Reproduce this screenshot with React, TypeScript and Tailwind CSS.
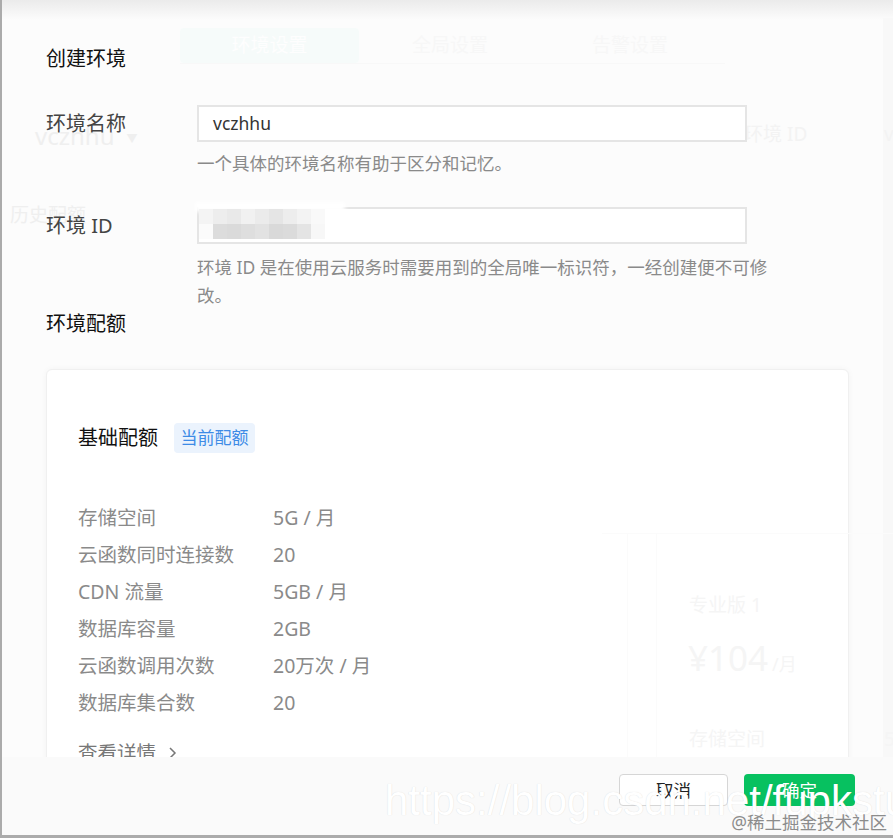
import React from "react";

const quotaRows: { label: string; value: string }[] = [
  { label: "存储空间", value: "5G / 月" },
  { label: "云函数同时连接数", value: "20" },
  { label: "CDN 流量", value: "5GB / 月" },
  { label: "数据库容量", value: "2GB" },
  { label: "云函数调用次数", value: "20万次 / 月" },
  { label: "数据库集合数", value: "20" },
];

// blurred id, drawn as a mosaic of grey cells
const mosaicTop = ["#f4f4f4", "#ededed", "#e9e9e9", "#f1f1f1", "#ebebeb", "#e5e5e5", "#ededed", "#f3f3f3", "#f9f9f9"];
const mosaicBottom = ["#fbfbfb", "#dcdcdc", "#dadada", "#dedede", "#e2e2e2", "#d9d9d9", "#dbdbdb", "#e4e4e4", "#f7f7f7"];

function BackgroundGhosts() {
  // faint traces of the page behind the dialog
  return (
    <>
      <div className="absolute inset-x-0 top-0 h-[20px] bg-gradient-to-b from-[#ebebeb] to-[#fcfcfc]" />
      <div className="absolute right-0 top-[18px] h-[740px] w-[10px] bg-[#f8f8f8]" />
      <div className="absolute left-[178px] top-[63px] h-px w-[545px] bg-[#f8f8f8]" />
      <div className="absolute left-[178px] top-[28px] flex h-[35px] w-[179px] items-center justify-center rounded-sm bg-[#f6fbfa] text-[19px] text-[#fefefe]">
        环境设置
      </div>
      <div className="absolute left-[410px] top-[32px] text-[19px] leading-[26px] text-[#f7f7f7]">全局设置</div>
      <div className="absolute left-[590px] top-[32px] text-[19px] leading-[26px] text-[#f7f7f7]">告警设置</div>
      <div className="absolute left-[33px] top-[124px] flex items-center gap-3 text-[24px] leading-none text-[#efefef]">
        vczhhu
        <span className="mt-1 text-[11px]">▼</span>
      </div>
      <div className="absolute left-[8px] top-[204px] text-[19px] leading-[22px] text-[#efefef]">历史配额</div>
      <div className="absolute left-[742px] top-[122px] text-[19px] leading-[24px] text-[#f3f3f3]">环境 ID</div>
      <div className="absolute left-[882px] top-[122px] text-[19px] leading-[24px] text-[#f3f3f3]">v</div>
    </>
  );
}

function CardGhosts() {
  return (
    <>
      <div className="absolute left-[600px] top-[533px] h-px w-[291px] bg-[#fbfbfb]" />
      <div className="absolute left-[625px] top-[533px] h-[224px] w-px bg-[#fbfbfb]" />
      <div className="absolute left-[654px] top-[533px] h-[224px] w-px bg-[#fbfbfb]" />
      <div className="absolute left-[687px] top-[593px] text-[19px] leading-[24px] text-[#f5f5f5]">专业版 1</div>
      <div className="absolute left-[686px] top-[636px] flex items-baseline text-[#f5f5f5]">
        <span className="text-[35px] leading-[44px]">¥104</span>
        <span className="ml-1 text-[18px]">/月</span>
      </div>
      <div className="absolute left-[687px] top-[727px] text-[19px] leading-[24px] text-[#f5f5f5]">存储空间</div>
      <div className="absolute left-[882px] top-[727px] text-[19px] leading-[24px] text-[#f5f5f5]">5</div>
    </>
  );
}

export default function App() {
  return (
    <div className="relative flex h-[838px] w-[893px] flex-col overflow-hidden border-b-[3px] border-l-2 border-[#ababab] bg-[#fcfcfc] font-['Noto_Sans','Noto_Sans_CJK_SC',sans-serif]">
      <BackgroundGhosts />

      {/* dialog body */}
      <div className="relative h-[757px] overflow-hidden pl-[44px] pt-[45px]">
        <h2 className="text-[20px] font-normal leading-[28px] text-[#111]">创建环境</h2>

        <div className="mt-[32px] grid grid-cols-[151px_600px]">
          <div className="text-[20px] leading-[37px] text-[#444]">环境名称</div>
          <div>
            <div className="flex h-[37px] w-[550px] items-center border-2 border-[#e5e5e5] bg-white pl-[14px] text-[17.5px] text-[#333]">
              vczhhu
            </div>
            <p className="mt-[8px] text-[17.5px] leading-[26px] text-[#8a8a8a]">一个具体的环境名称有助于区分和记忆。</p>
          </div>

          <div className="mt-[31px] text-[20px] leading-[37px] text-[#444]">环境 ID</div>
          <div className="mt-[31px]">
            <div className="relative h-[37px] w-[550px] border-2 border-[#e5e5e5] bg-white">
              <div className="absolute -top-[7px] -left-[4px] h-[10px] w-[150px] bg-white blur-[2px]" />
              <div className="relative flex flex-col">
                <div className="flex">
                  {mosaicTop.map((c, i) => (
                    <span key={i} className="h-[15px] w-[14px]" style={{ backgroundColor: c }} />
                  ))}
                </div>
                <div className="flex">
                  {mosaicBottom.map((c, i) => (
                    <span key={i} className="h-[15px] w-[14px]" style={{ backgroundColor: c }} />
                  ))}
                </div>
              </div>
            </div>
            <p className="mt-[9px] text-[17.5px] leading-[28px] text-[#8a8a8a]">
              环境 ID 是在使用云服务时需要用到的全局唯一标识符，一经创建便不可修
              <br />
              改。
            </p>
          </div>
        </div>

        <h3 className="mt-[1px] text-[20px] font-normal leading-[28px] text-[#111]">环境配额</h3>

        <div className="mt-[31px] w-[803px] rounded-md border border-[#f0f0f0] bg-white pb-6 pl-[31px] pt-[53px] shadow-[0_0_6px_rgba(0,0,0,0.04)]">
          <div className="flex h-[30px] items-center">
            <span className="text-[20px] text-[#111]">基础配额</span>
            <span className="ml-4 flex h-[30px] w-[81px] items-center justify-center rounded bg-[#ebf3fd] text-[17px] text-[#3d8be6]">
              当前配额
            </span>
          </div>

          <div className="mt-[46px]">
            {quotaRows.map((row) => (
              <div key={row.label} className="flex h-[37px] items-center text-[19.5px] text-[#8a8a8a]">
                <span className="w-[195px]">{row.label}</span>
                <span>{row.value}</span>
              </div>
            ))}
          </div>

          <div className="mt-[13px] flex h-[37px] items-center gap-3 text-[19.5px] text-[#777]">
            查看详情
            <svg width="10" height="14" viewBox="0 0 10 14" fill="none" stroke="#777" strokeWidth="1.5">
              <polyline points="2,2 7,7 2,12" />
            </svg>
          </div>
        </div>
      </div>

      <CardGhosts />

      {/* dialog footer */}
      <div className="relative flex flex-1 items-start justify-end gap-4 bg-[#fafafa] pr-[38px] pt-[17px]">
        <button className="h-[32px] w-[109px] rounded border border-[#d6d6d6] bg-white text-[17.5px] text-[#222]">取消</button>
        <button className="h-[32px] w-[111px] rounded bg-[#07c160] text-[17.5px] text-white">确定</button>
      </div>

      {/* watermarks */}
      <div className="pointer-events-none absolute left-[383px] top-[780px] whitespace-nowrap font-['Liberation_Sans',sans-serif] text-[42px] leading-none text-white [text-shadow:0_0_1px_rgba(0,0,0,0.15)]">
        https://blog.csdn.net/fupkstu
      </div>
      <div className="pointer-events-none absolute right-[6px] top-[811px] whitespace-nowrap text-[17.5px] leading-[22px] text-[#8c8c8c]">
        @稀土掘金技术社区
      </div>
    </div>
  );
}
